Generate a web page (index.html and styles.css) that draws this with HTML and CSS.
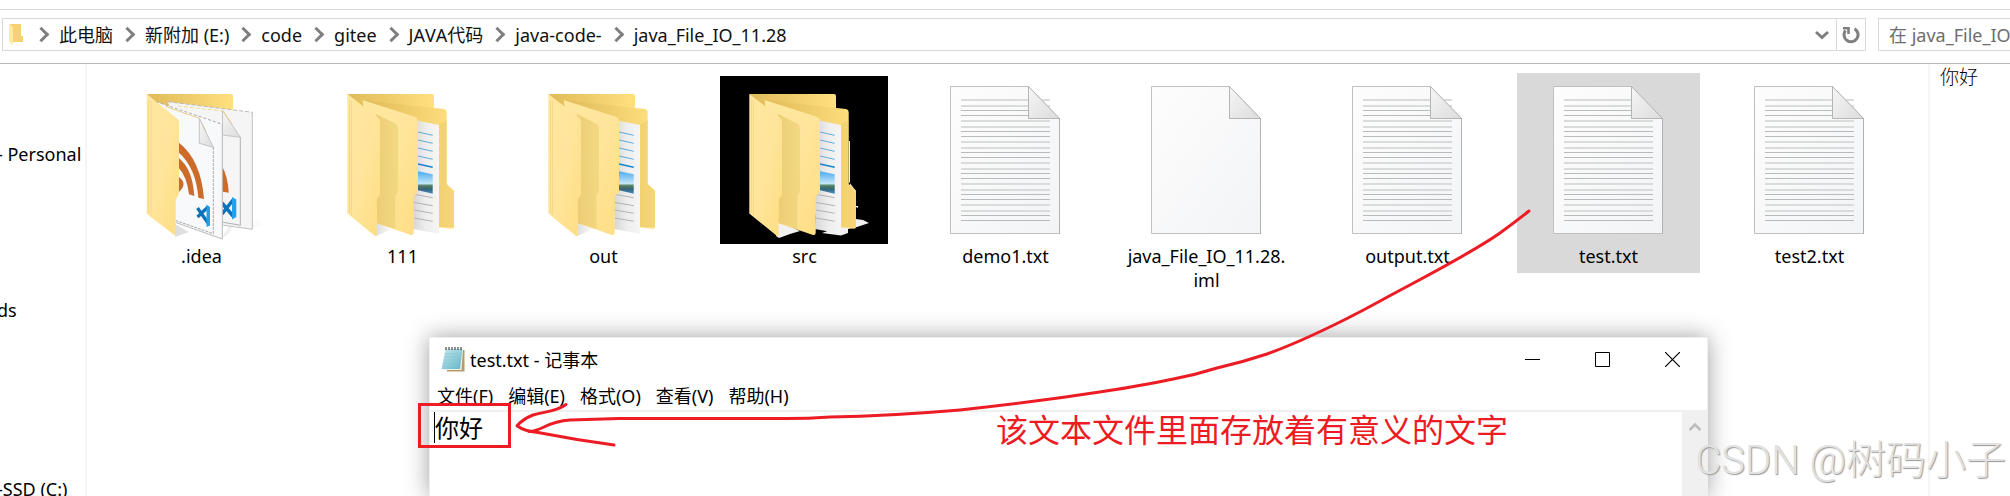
FILE: index.html
```html
<!DOCTYPE html>
<html lang="zh-CN">
<head>
<meta charset="utf-8">
<title>java_File_IO_11.28</title>
<link rel="stylesheet" href="styles.css">
</head>
<body>
<svg class="defs" width="0" height="0" aria-hidden="true">
  <defs>
    <linearGradient id="page" x1="0" y1="0" x2="1" y2="1"><stop offset="0" stop-color="#fdfdfd"/><stop offset="1" stop-color="#f3f4f6"/></linearGradient>
    <linearGradient id="fold" x1="0" y1="0" x2="1" y2="1"><stop offset="0" stop-color="#f6f6f6"/><stop offset="1" stop-color="#dcdcdc"/></linearGradient>
    <linearGradient id="flap" x1="0" y1="0" x2="1" y2="1"><stop offset="0" stop-color="#ffe79f"/><stop offset=".5" stop-color="#ffe59b"/><stop offset="1" stop-color="#ffdd82"/></linearGradient>
    <linearGradient id="back" x1="0" y1="0" x2="1" y2="0"><stop offset="0" stop-color="#e0ba58"/><stop offset="1" stop-color="#ffe07f"/></linearGradient>
    <linearGradient id="shade" x1="0" y1="0" x2="1" y2="0"><stop offset="0" stop-color="#e9c96f"/><stop offset="1" stop-color="#f1d67e"/></linearGradient>
    <linearGradient id="paper" x1="0" y1="0" x2="1" y2="0"><stop offset="0" stop-color="#d6d6d6"/><stop offset=".5" stop-color="#eeeeee"/><stop offset="1" stop-color="#f5f5f5"/></linearGradient>
    <linearGradient id="photo" x1="0" y1="0" x2="0" y2="1"><stop offset="0" stop-color="#4ba9ef"/><stop offset=".55" stop-color="#c5e6f8"/><stop offset=".65" stop-color="#4f7f5c"/><stop offset=".8" stop-color="#36657a"/><stop offset="1" stop-color="#3f8cc4"/></linearGradient>
    <linearGradient id="ground" x1="0" y1="0" x2="1" y2="0"><stop offset="0" stop-color="#dddddd"/><stop offset="1" stop-color="#ffffff"/></linearGradient>
    <g id="blank-doc">
      <path d="M29.5 10.5H107.5L138.5 42.5V157.5H29.5Z" fill="url(#page)" stroke="#bfc1c1"/>
      <path d="M107.5 10.5V42.5H138.5Z" fill="url(#fold)" stroke="#b4b5b5"/>
      <path d="M138.5 42V158" stroke="#b0b1b1"/>
    </g>
    <g id="rules">
      <path d="M40 24H129M40 30H129" stroke="#dadbdb" stroke-width="2"/>
      <path d="M40 34.5H129M40 39.5H129" stroke="#b9babc"/>
    </g>
    <g id="text-doc">
      <path d="M29.5 10.5H107.5L138.5 42.5V157.5H29.5Z" fill="url(#page)" stroke="#bfc1c1"/>
      <use href="#rules"/><use href="#rules" y="21"/><use href="#rules" y="42"/><use href="#rules" y="63"/><use href="#rules" y="84"/><use href="#rules" y="105"/>
      <path d="M107.5 10.5V42.5H138.5Z" fill="url(#fold)" stroke="#b4b5b5"/>
      <path d="M138.5 42V158" stroke="#b0b1b1"/>
    </g>
    <g id="folder">
      <path d="M29.3 18H114Q116 18 116 20V60H70Z" fill="url(#back)"/>
      <path d="M44.7 24L126 33Q128.700 33.500 128.700 36V108L136 114.700V150.700Q136 152.700 134 152.700L100 149Z" fill="url(#back)"/>
      <path d="M121 49L128.700 44V108L136 115V151L121 151Z" fill="#e9c66a" opacity=".4"/>
      <path d="M99 44.500L121 49V157.700L95 153Z" fill="url(#paper)"/>
      <path d="M100 56L114.700 59.300M100 64L114.700 67.300M100 72L114.700 75.300M100 80L114.700 83.300" stroke="#62acd8"/>
      <path d="M100 88L114.700 91.300" stroke="#1686cf" stroke-width="1.600"/>
      <path d="M99 95L114.700 98.300V117.700L99 114Z" fill="url(#photo)"/>
      <path d="M97 118.500L114.700 121.700M96 126.500L114.700 129.700M96 134L114.700 137.300M96 142L114.700 145.300" stroke="#b3b3b3"/>
      <path d="M44.700 24L97.500 41Q100 42 100 45V115.700L95.700 120.700V156.700Q95.700 159.500 93 159L58.700 147.300Z" fill="url(#flap)"/>
      <path d="M58 38L78 48Q80 50 80 54V116L77.500 120V153L58.700 147.300Z" fill="url(#shade)" opacity=".85"/>
      <path d="M29.300 18L60 41.500Q62 43 62 46V119L58.700 123V160H57L29.300 137.500Z" fill="url(#flap)"/>
      <path d="M31.500 24V137M33.500 25V139" stroke="#f3d17a" stroke-width=".7"/>
    </g>
  </defs>
</svg>

<main class="explorer">
  <header class="toolbar">
    <nav class="address" aria-label="地址">
      <svg class="mini-folder" width="14" height="21" viewBox="0 0 14 21" aria-hidden="true"><path d="M1 0H12V12H14V18H4Z" fill="#f6d274"/><path d="M0 0L4 3V21L0 18Z" fill="#ffe9a5"/></svg>
      <ol class="crumbs">
        <li><a href="#">此电脑</a></li>
        <li><a href="#">新附加 (E:)</a></li>
        <li><a href="#">code</a></li>
        <li><a href="#">gitee</a></li>
        <li><a href="#">JAVA代码</a></li>
        <li><a href="#">java-code-</a></li>
        <li><a href="#">java_File_IO_11.28</a></li>
      </ol>
      <button class="tool history" type="button" aria-label="历史"><svg width="14" height="10" viewBox="0 0 14 10"><path d="M1 2L7 7.500L13 2" fill="none" stroke="#7f7f7f" stroke-width="3"/></svg></button>
      <button class="tool refresh" type="button" aria-label="刷新"><svg width="18" height="18" viewBox="0 0 18 18"><path d="M12.500 2.700A7 7 0 1 1 3.500 4.500" fill="none" stroke="#7f7f7f" stroke-width="3"/><path d="M1 2.300H6.500V8" fill="none" stroke="#7f7f7f" stroke-width="2.600"/></svg></button>
    </nav>
    <input class="search" type="text" aria-label="搜索" placeholder="在 java_File_IO_11.28 中搜索">
  </header>

  <div class="panes">
    <nav class="sidebar" aria-label="导航">
      <ul>
        <li>- Personal</li>
        <li class="downloads">ds</li>
        <li class="drive">-SSD (C:)</li>
      </ul>
    </nav>

    <section class="files" aria-label="文件">
      <figure class="file">
        <svg viewBox="0 0 168 168" aria-hidden="true">
          <path d="M58 161L72 156L58 148ZM105 162Q118 156 113 148ZM135 153L152 147Q142 144 135 144Z" fill="url(#ground)"/>
          <path d="M29.700 18H114Q116 18 116 20V60H70Z" fill="url(#back)"/>
          <path d="M50.700 25.700L135.300 36.300V153.300L100 148Z" fill="#f5f5f6"/>
          <path d="M50.700 25.700L135.300 36.300" stroke="#b9b9b9" stroke-dasharray="4 2"/>
          <path d="M61 30L106 35" stroke="#f5dc95" stroke-dasharray="4 2"/>
          <path d="M135.300 36V153.300L105 149" fill="none" stroke="#bfc1c1"/>
          <path d="M123.300 61V149.300L105 146" fill="none" stroke="#b0b0b0"/>
          <path d="M105.500 34.500L123.300 61.300L105.500 59Z" fill="url(#fold)" stroke="#c4c4c4"/>
          <path d="M106 35L115 48" stroke="#edd18a"/>
          <path d="M105 90Q111 101 111.700 116.700L105 115.500Z" fill="#cd6b2b"/>
          <path d="M105 127L116 140M105 138L116 124" stroke="#0873b8" stroke-width="3.500"/>
          <path d="M115 121L119.300 123.500V141L115 143.500Z" fill="#259fe9"/>
          <path d="M39 25.700L105.300 48.300V163L50 143Z" fill="#f8f9fa"/>
          <path d="M39 25.700L105.300 48.300" stroke="#aaa" stroke-dasharray="3 2"/>
          <path d="M48.700 30.500L82.300 42.300L89 55" fill="none" stroke="#ebcf86"/>
          <path d="M105.300 48V163L58.700 146.500" fill="none" stroke="#b9b9b9"/>
          <path d="M96.300 71V157.700L58.700 144.500" fill="none" stroke="#a9a9a9" stroke-dasharray="3 1"/>
          <path d="M82.300 42.500V67.300L96.300 71.300Z" fill="url(#fold)" stroke="#c4c4c4"/>
          <path d="M62 66.700Q84 84 87 123L81.300 121.700Q79 92 62 76.700ZM62 82.300Q75.500 93 77.300 120L72 118.300Q70 101 62 92.300ZM62 101Q71 108 62 115.700Z" fill="#cd6b2b"/>
          <path d="M80.500 132L91 147M80.500 141L91 131" stroke="#0873b8" stroke-width="3.200"/>
          <path d="M89.500 128.500L93 131V149.500L89.500 151Z" fill="#259fe9"/>
          <path d="M29.700 18L60 42.500Q62 44 62 46.500V118L58.700 123.500V160L29.700 138Z" fill="url(#flap)"/>
          <path d="M31.500 24V137M34 25V139" stroke="#f3d17a" stroke-width=".7"/>
        </svg>
        <figcaption>.idea</figcaption>
      </figure>
      <figure class="file">
        <svg viewBox="0 0 168 168" aria-hidden="true"><path d="M58 160L75 153L58 146Z" fill="url(#ground)"/><use href="#folder"/></svg>
        <figcaption>111</figcaption>
      </figure>
      <figure class="file">
        <svg viewBox="0 0 168 168" aria-hidden="true"><path d="M58 160L75 153L58 146Z" fill="url(#ground)"/><use href="#folder"/></svg>
        <figcaption>out</figcaption>
      </figure>
      <figure class="file">
        <svg viewBox="0 0 168 168" aria-hidden="true"><rect width="168" height="168"/><path d="M56 160L59 162L70 158L80 155L58 145ZM102 157L121 159.500L128 157V153L137 151L149 147L143 144L136 143V131L138 132V130L136 130V115L129 106V65H130V110L121 120V150Z" fill="#f1f1f1"/><use href="#folder"/></svg>
        <figcaption>src</figcaption>
      </figure>
      <figure class="file">
        <svg viewBox="0 0 168 168" aria-hidden="true"><use href="#text-doc"/></svg>
        <figcaption>demo1.txt</figcaption>
      </figure>
      <figure class="file">
        <svg viewBox="0 0 168 168" aria-hidden="true"><use href="#blank-doc"/></svg>
        <figcaption>java_File_IO_11.28.<wbr>iml</figcaption>
      </figure>
      <figure class="file">
        <svg viewBox="0 0 168 168" aria-hidden="true"><use href="#text-doc"/></svg>
        <figcaption>output.txt</figcaption>
      </figure>
      <figure class="file selected">
        <svg viewBox="0 0 168 168" aria-hidden="true"><use href="#text-doc"/></svg>
        <figcaption>test.txt</figcaption>
      </figure>
      <figure class="file">
        <svg viewBox="0 0 168 168" aria-hidden="true"><use href="#text-doc"/></svg>
        <figcaption>test2.txt</figcaption>
      </figure>
    </section>

    <aside class="preview" aria-label="预览">你好</aside>
  </div>

  <section class="notepad" aria-label="记事本">
    <header class="titlebar">
      <svg width="24" height="25" viewBox="0 0 24 25" aria-hidden="true">
        <defs><linearGradient id="pad" x1="0" y1="0" x2="1" y2="1"><stop offset="0" stop-color="#c9eaf0"/><stop offset="1" stop-color="#5fb4c6"/></linearGradient></defs>
        <path d="M6 3H23.500V24.500H6Z" fill="#b39c6b"/><path d="M5 2H22L20.500 23H2Z" fill="#f3efe4"/><path d="M4.500 2H21.500L19 22H.500Z" fill="url(#pad)"/>
        <path d="M4 7H19M4 10H19M3 13H18M3 16H18M2 19H17" stroke="#8cc7d3" stroke-width=".8"/>
        <path d="M5 0V3M8 0V3M11 0V3M14 0V3M17 0V3M20 0V3" stroke="#555" stroke-width="1.300"/>
      </svg>
      <h1>test.txt - 记事本</h1>
      <button type="button" aria-label="最小化"><svg width="15" height="15" viewBox="0 0 15 15"><path d="M0 7.500H15" stroke="#000"/></svg></button>
      <button type="button" aria-label="最大化"><svg width="15" height="15" viewBox="0 0 15 15"><path d="M.5.5H14.500V14.500H.5Z" fill="none" stroke="#000"/></svg></button>
      <button type="button" aria-label="关闭"><svg width="15" height="15" viewBox="0 0 15 15"><path d="M0 0L15 15M15 0L0 15" stroke="#000" stroke-width="1.200"/></svg></button>
    </header>
    <nav class="menu" aria-label="菜单">
      <button type="button">文件(F)</button>
      <button type="button">编辑(E)</button>
      <button type="button">格式(O)</button>
      <button type="button">查看(V)</button>
      <button type="button">帮助(H)</button>
    </nav>
    <div class="editor">
      <div class="caret"></div>
      <textarea aria-label="文本">你好</textarea>
      <div class="scrollbar"><button type="button" aria-label="向上滚动"><svg width="12" height="10" viewBox="0 0 12 10"><path d="M.5 8L6 2.500L11.500 8" fill="none" stroke="#bdbdbd" stroke-width="2.600"/></svg></button></div>
    </div>
  </section>

  <svg class="ink" aria-hidden="true">
    <rect x="419.500" y="404.500" width="90" height="42"/>
    <path d="M1529 211Q1515 222 1500 233C1470 254 1430 274 1382 300Q1364 310 1344 320C1310 337 1292 345 1267 354Q1243 362 1217 368Q1195 375 1171 379.500C1148 384 1128 388 1103 391.500Q1035 402 960 410Q890 416 830 417Q808 418.500 787 418.500H619L570 420Q556 421 544 427Q536 431 529 431.500"/>
    <path d="M566 404.500C556 412 546 411 533 415Q523 419 517 425.700Q524 431 538 432.500L577 439.500L614 445"/>
  </svg>
  <p class="note">该文本文件里面存放着有意义的文字</p>
  <p class="watermark">CSDN @树码小子</p>
</main>
</body>
</html>
```
FILE: styles.css
```css
* { box-sizing: border-box; }

body {
  margin: 0;
  background: #fff;
  color: #000;
  font: 18px/24px "Noto Sans", "Noto Sans CJK SC", sans-serif;
  font-kerning: none;
}

button, input, textarea {
  margin: 0;
  padding: 0;
  border: 0;
  border-radius: 0;
  background: none;
  color: inherit;
  font: inherit;
  font-kerning: none;
}

ul, ol, p, h1, figure { margin: 0; padding: 0; list-style: none; font-weight: 400; }

svg { display: block; flex: none; }

.defs { position: absolute; }

.explorer {
  position: relative;
  display: flex;
  flex-direction: column;
  height: 100vh;
  padding-top: 9px;
  overflow: hidden;
}

.toolbar {
  display: flex;
  gap: 12px;
  height: 55px;
  padding: 8px 0 12px 2px;
  border-top: 1px solid #d9d9d9;
  border-bottom: 1px solid #b9b9b9;
}

.address {
  display: flex;
  flex: 1;
  align-items: center;
  border: 1px solid #d9d9d9;
  height: 33px;
  padding-left: 6px;
}

.crumbs { display: flex; flex: 1; padding-left: 4px; }

.crumbs li { display: flex; align-items: center; }

.crumbs li::before {
  content: "";
  width: 8px;
  height: 8px;
  margin: 0 12px 0 9px;
  border: solid #7f7f7f;
  border-width: 3px 3px 0 0;
  transform: rotate(45deg);
}

.crumbs a { color: #111; text-decoration: none; }

.tool { display: grid; place-items: center; height: 31px; }
.history { width: 28px; }
.refresh { width: 29px; border-left: 1px solid #d9d9d9; }

.search {
  width: 132px;
  height: 33px;
  padding-left: 10px;
  border: 1px solid #d9d9d9;
  border-right: 0;
  outline: 0;
}

.search::placeholder { color: #6d6d6d; opacity: 1; }

.panes { display: flex; flex: 1; min-height: 0; }

.sidebar {
  width: 87px;
  padding-top: 78px;
  border-right: 2px solid #f5f5f5;
  white-space: nowrap;
  overflow: hidden;
}

.sidebar ul { margin-left: -3px; }
.downloads { margin-top: 132px; }
.drive { margin-top: 155px; }

.files {
  display: flex;
  flex: 1;
  flex-wrap: wrap;
  align-items: flex-start;
  align-content: flex-start;
  gap: 18px;
  padding: 9px 0 0 23px;
}

.file { width: 183px; padding: 3px 7px 5px; text-align: center; }
.file svg { width: 168px; height: 168px; }
.selected { background: #d9d9d9; }

.preview {
  width: 82px;
  padding: 0 10px;
  border-left: 2px solid #f5f5f5;
  font-family: "Noto Sans CJK SC", sans-serif;
  font-size: 19px;
  font-weight: 300;
}

.notepad {
  position: absolute;
  top: 337px;
  right: 302px;
  bottom: 0;
  left: 429px;
  display: flex;
  flex-direction: column;
  border: solid #f0f0f0;
  border-width: 1px 1px 0;
  background: #fff;
  box-shadow: 0 0 22px rgba(0, 0, 0, .38);
}

.titlebar { display: flex; align-items: center; height: 43px; padding-left: 11px; }
.titlebar h1 { flex: 1; padding-left: 5px; font-size: 18px; }
.titlebar button { display: grid; place-items: center; width: 70px; height: 43px; }

.menu { display: flex; gap: 15px; height: 31px; padding: 3px 7px 4px; border-bottom: 2px solid #f0f0f0; }

.editor { display: flex; flex: 1; min-height: 0; padding-left: 4px; }
.caret { width: 1px; height: 31px; background: #000; }

.editor textarea {
  flex: 1;
  outline: 0;
  resize: none;
  overflow: hidden;
  font-size: 24px;
  line-height: 32px;
}

.scrollbar { width: 25px; background: #f0f0f0; }
.scrollbar button { display: grid; place-items: center; width: 25px; height: 30px; }

.ink {
  position: absolute;
  inset: 0;
  width: 100%;
  height: 100%;
  fill: none;
  stroke: #ed1c24;
  stroke-width: 3;
  stroke-linecap: round;
  stroke-linejoin: round;
  pointer-events: none;
}

.ink rect { stroke-linejoin: miter; }

.note {
  position: absolute;
  top: 410px;
  left: 996px;
  color: #ed1c24;
  font-size: 32px;
  line-height: 40px;
  white-space: nowrap;
}

.watermark {
  position: absolute;
  right: 4px;
  bottom: 10px;
  color: #e2e2e2;
  font: 300 40px/50px Roboto, "Noto Sans CJK SC", sans-serif;
  text-shadow: 1px 1px 1px #999;
  white-space: nowrap;
}
```
